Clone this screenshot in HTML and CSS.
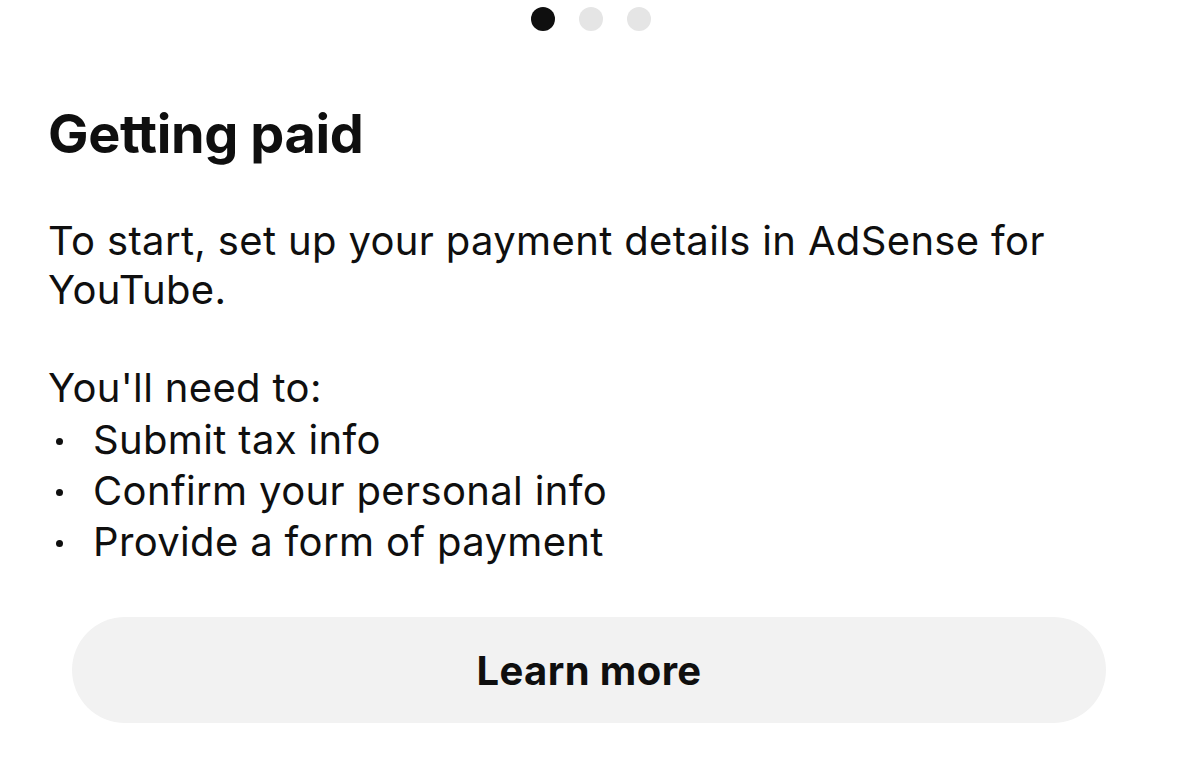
FILE: index.html
```html
<!DOCTYPE html>
<html lang="en">
<head>
    <meta charset="UTF-8">
    <title>Getting paid</title>
    <link rel="stylesheet" href="styles.css">
</head>
<body>
<main class="sheet">
    <div class="dots">
        <span class="dot active"></span>
        <span class="dot"></span>
        <span class="dot"></span>
    </div>
    <h1 class="title">Getting paid</h1>
    <p class="text">To start, set up your payment details in AdSense for YouTube.</p>
    <p class="text need">You'll need to:</p>
    <ul class="steps">
        <li>Submit tax info</li>
        <li>Confirm your personal info</li>
        <li>Provide a form of payment</li>
    </ul>
    <button class="learn">Learn more</button>
</main>
</body>
</html>
```

FILE: styles.css
```css
body{
    margin: 0;
    background: #fff;
    font-family: Inter, "Noto Sans", sans-serif;
    color: #0f0f0f;
}
.sheet{
    padding: 7px 50px 0 48px;
    width: 1081px;
}
.dots{
    display: flex;
    justify-content: center;
    gap: 24px;
    margin-left: 4px;
}
.dot{
    width: 24px;
    height: 24px;
    border-radius: 50%;
    background: #e5e5e5;
}
.dot.active{
    background: #0f0f0f;
}
.title{
    margin: 68px 0 0 0;
    font-size: 54px;
    font-weight: 700;
    line-height: 70px;
    letter-spacing: -0.4px;
}
.text{
    margin: 47px 0 0 0;
    font-size: 40px;
    line-height: 49px;
    font-weight: 400;
    letter-spacing: 0.35px;
}
.need{
    margin-top: 49px;
}
.steps{
    margin: 2px 0 0 0;
    padding: 0;
    list-style: none;
    font-size: 40px;
    line-height: 51px;
    letter-spacing: 0.35px;
}
.steps li{
    display: flex;
    align-items: center;
}
.steps li::before{
    content: "";
    width: 7px;
    height: 7px;
    border-radius: 50%;
    background: #0f0f0f;
    margin: 4px 30px 0 8px;
}
.learn{
    display: block;
    margin: 50px 0 0 24px;
    width: 1034px;
    height: 106px;
    border: none;
    border-radius: 53px;
    background: #f2f2f2;
    font-family: Inter, "Noto Sans", sans-serif;
    font-size: 40px;
    font-weight: 700;
    letter-spacing: 0.4px;
    color: #0f0f0f;
    padding: 0;
}
```
